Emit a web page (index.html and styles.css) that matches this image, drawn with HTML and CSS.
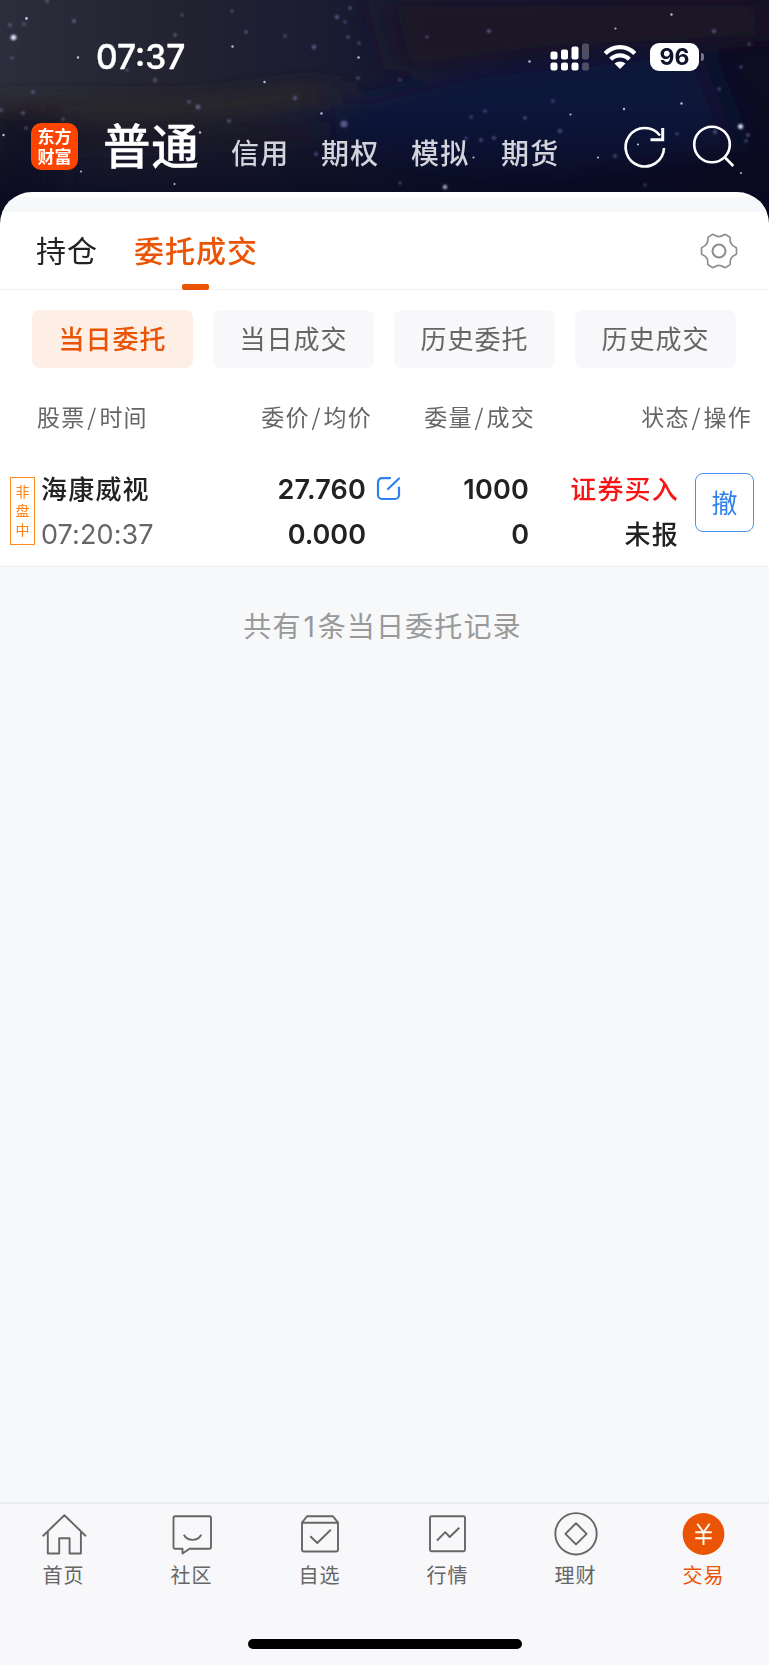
FILE: index.html
```html
<!DOCTYPE html>
<html lang="zh-CN">
<head>
<meta charset="utf-8">
<title>委托成交</title>
<link rel="stylesheet" href="styles.css">
</head>
<body>
<div class="app">
  <header class="hero">
    <svg class="sky" viewBox="0 0 769 240" preserveAspectRatio="none">
      <defs>
        <linearGradient id="base" x1="0" y1="0" x2="1" y2="0">
          <stop offset="0" stop-color="#2c2e3c"/><stop offset=".22" stop-color="#232331"/>
          <stop offset=".45" stop-color="#191b32"/><stop offset=".7" stop-color="#0f1230"/><stop offset="1" stop-color="#0e0c20"/>
        </linearGradient>
        <linearGradient id="fade" x1="0" y1="0" x2="0" y2="1">
          <stop offset=".45" stop-color="#07091f" stop-opacity="0"/><stop offset=".82" stop-color="#07091f" stop-opacity=".8"/><stop offset="1" stop-color="#05071a"/>
        </linearGradient>
        <filter id="soft" x="-30%" y="-60%" width="160%" height="220%"><feGaussianBlur stdDeviation="22 9"/></filter>
        <filter id="glow" x="-5%" y="-5%" width="110%" height="110%"><feGaussianBlur stdDeviation=".8"/></filter>
      </defs>
      <rect width="769" height="240" fill="url(#base)"/>
      <g filter="url(#soft)">
        <path d="M320 110 L480 72 L700 50 L740 150 L520 180 L330 150Z" fill="#0d153a"/>
        <path d="M380 0 H769 V40 L560 50 L400 72Z" fill="#1b1826"/>
        <path d="M-20 98 H200 L330 80 V102 L200 118 H-20Z" fill="#2a2629"/>
        <path d="M60 128 H330 V138 L60 150Z" fill="#241d28"/>
        <path d="M-20 112 H60 V220 H-20Z" fill="#131426"/>
      </g>
      <rect width="769" height="240" fill="url(#fade)"/>
      <g fill="#8b80c4" opacity=".6" filter="url(#glow)">
        <circle cx="47" cy="1" r="1.8"/><circle cx="10" cy="25" r="1.8"/><circle cx="24" cy="24" r="1.6"/><circle cx="74" cy="21" r="2"/>
        <circle cx="182" cy="15" r="1.5"/><circle cx="175" cy="35" r="1.8"/><circle cx="232" cy="11" r="1.5"/><circle cx="246" cy="32" r="1.7"/>
        <circle cx="285" cy="36" r="1.5"/><circle cx="337" cy="17" r="2"/><circle cx="350" cy="8" r="1.7"/><circle cx="345" cy="22" r="1.4"/>
        <circle cx="348" cy="37" r="1.6"/><circle cx="314" cy="47" r="2.2"/><circle cx="359" cy="43" r="1.5"/><circle cx="358" cy="78" r="1.6"/>
        <circle cx="155" cy="80" r="1.9"/><circle cx="127" cy="70" r="1.6"/><circle cx="295" cy="98" r="2"/><circle cx="189" cy="102" r="1.7"/>
        <circle cx="198" cy="107" r="2.4"/><circle cx="229" cy="121" r="1.8"/><circle cx="344" cy="124" r="3.6"/><circle cx="33" cy="92" r="1.8"/>
        <circle cx="1" cy="110" r="1.8"/><circle cx="23" cy="113" r="1.8"/><circle cx="63" cy="119" r="1.6"/><circle cx="26" cy="128" r="1.6"/>
        <circle cx="316" cy="154" r="1.8"/><circle cx="12" cy="58" r="1.6"/><circle cx="489" cy="31" r="2"/><circle cx="427" cy="37" r="1.4"/>
        <circle cx="714" cy="31" r="2"/><circle cx="749" cy="44" r="1.5"/><circle cx="741" cy="67" r="1.5"/><circle cx="719" cy="89" r="1.6"/>
        <circle cx="553" cy="101" r="1.6"/><circle cx="485" cy="111" r="1.6"/><circle cx="525" cy="118" r="1.7"/><circle cx="560" cy="131" r="1.9"/>
        <circle cx="481" cy="140" r="1.8"/><circle cx="494" cy="138" r="1.8"/><circle cx="466" cy="138" r="1.4"/><circle cx="615" cy="156" r="1.7"/>
        <circle cx="715" cy="132" r="1.9"/><circle cx="748" cy="135" r="1.8"/><circle cx="746" cy="141" r="1.4"/><circle cx="400" cy="80" r="1.4"/>
        <circle cx="471" cy="117" r="1.5"/><circle cx="400" cy="183" r="1.4"/><circle cx="645" cy="185" r="1.3"/><circle cx="677" cy="134" r="1.4"/>
      </g>
      <g fill="#dde1ff" filter="url(#glow)">
        <circle cx="13.500" cy="37.500" r="2.800"/><circle cx="740.500" cy="126.500" r="2.500"/><circle cx="445" cy="187" r="2.200" opacity=".75"/><circle cx="518" cy="147" r="2" opacity=".8"/>
      </g>
      <g fill="#d5dcff" opacity=".85">
        <circle cx="26.500" cy="18.500" r="1.400"/><circle cx="78" cy="57.500" r="1.200"/><circle cx="232.500" cy="46.500" r="1.200"/><circle cx="264.500" cy="82" r="1.200"/>
        <circle cx="358.500" cy="57.500" r="1.200"/><circle cx="321.500" cy="113.500" r="1.200"/><circle cx="3.500" cy="135" r="1.200"/><circle cx="200" cy="132.500" r="1.200"/>
        <circle cx="81" cy="171.500" r="1"/><circle cx="174.500" cy="184" r="1.100"/><circle cx="671.500" cy="14.500" r="1.200"/><circle cx="615.500" cy="28.500" r="1.100"/>
        <circle cx="529.500" cy="61.500" r="1.200"/><circle cx="681.500" cy="103.500" r="1.200"/><circle cx="624" cy="109" r="1.200"/><circle cx="570.500" cy="114.500" r="1.100"/>
        <circle cx="473.500" cy="157.500" r="1.100"/><circle cx="598" cy="157.500" r="1.100"/><circle cx="638" cy="144.500" r="1.100"/><circle cx="741" cy="173" r="1"/>
      </g>
    </svg>

    <div class="status">
      <span class="clock">07:37</span>
      <div class="indicators">
        <svg width="39" height="28" viewBox="0 0 39 28">
          <g fill="#fff">
            <rect x="0.500" y="8.500" width="7" height="8" rx="2"/><rect x="11" y="6.500" width="7" height="10" rx="2"/><rect x="21.500" y="3.500" width="7" height="13" rx="2"/>
            <rect x="0.500" y="19.500" width="7" height="8" rx="2.300"/><rect x="11" y="19.500" width="7" height="8" rx="2.300"/><rect x="21.500" y="19.500" width="7" height="8" rx="2.300"/>
          </g>
          <g fill="#fff" fill-opacity=".25"><rect x="32" y="0.500" width="7" height="16" rx="2"/><rect x="32" y="19.500" width="7" height="8" rx="2.300"/></g>
        </svg>
        <svg class="wifi" width="34" height="26" viewBox="0 0 34 26">
          <g fill="none" stroke="#fff" stroke-width="4.300"><path d="M2.200 9.400C10.500 1.100 23.500 1.100 31.800 9.400"/><path d="M7.700 15.200C13 10 21 10 26.300 15.200"/></g>
          <path d="M17 25l-5.500-5.500c3.100-2.700 7.900-2.700 11 0z" fill="#fff"/>
        </svg>
        <span class="battery">96</span>
        <i class="nub"></i>
      </div>
    </div>

    <div class="titlebar">
      <div class="logo">东方<br>财富</div>
      <h1>普通</h1>
      <nav class="modes"><span>信用</span><span>期权</span><span>模拟</span><span>期货</span></nav>
      <svg class="refresh" width="46" height="46" viewBox="0 0 46 46" fill="none" stroke="#fff" stroke-width="2.600">
        <path d="M42 24A19.200 19.200 0 1 1 38 11.500"/><path d="M40.700 4V15.700H28.500" stroke-width="3"/>
      </svg>
      <svg class="search" width="46" height="46" viewBox="0 0 46 46" fill="none" stroke="#fff" stroke-width="2.600">
        <circle cx="21" cy="20.500" r="17.800"/><path d="M33.500 33L42.300 42"/>
      </svg>
    </div>
  </header>

  <main class="sheet">
    <div class="strip"></div>
    <div class="tabs">
      <span class="tab">持仓</span>
      <span class="tab active">委托成交</span>
      <svg class="gear" width="38" height="36" viewBox="0 0 38 36" fill="none" stroke="#8e8e8e" stroke-width="1.700" stroke-linejoin="round">
        <path d="M12.500 1.500Q13.300 1.200 14 1.800C17 4 21 4 24 1.800Q24.700 1.200 25.500 1.500L29.500 3.900Q30.300 4.400 30.200 5.300C29.800 9.300 31.800 12.700 35.600 14.200Q36.500 14.600 36.500 15.500V20.500Q36.500 21.500 35.600 21.800C31.800 23.300 29.800 26.700 30.200 30.700Q30.300 31.600 29.500 32.100L25.500 34.500Q24.700 34.800 24 34.200C21 32 17 32 14 34.200Q13.300 34.800 12.500 34.500L8.500 32.100Q7.700 31.600 7.800 30.700C8.200 26.700 6.200 23.300 2.400 21.800Q1.500 21.500 1.500 20.500V15.500Q1.500 14.600 2.400 14.200C6.200 12.700 8.200 9.300 7.800 5.300Q7.700 4.400 8.500 3.900Z"/>
        <circle cx="19" cy="18" r="6.500" stroke-width="2.100"/>
      </svg>
    </div>
    <div class="chips">
      <span class="chip on">当日委托</span><span class="chip">当日成交</span><span class="chip">历史委托</span><span class="chip">历史成交</span>
    </div>
    <div class="cols head">
      <span class="left">股票<b>/</b>时间</span><span>委价<b>/</b>均价</span><span>委量<b>/</b>成交</span><span>状态<b>/</b>操作</span>
    </div>
    <div class="order">
      <div class="tag"><span>非</span><span>盘</span><span>中</span></div>
      <div class="pair name"><span class="cn">海康威视</span><span class="time">07:20:37</span></div>
      <div class="pair price"><span class="wide">27.760</span><span>0.000</span></div>
      <svg class="edit" width="26" height="26" viewBox="0 0 26 26" fill="none" stroke="#2f80ed" stroke-width="2.200" stroke-linecap="round">
        <path d="M14 2.200H6A4 4 0 0 0 2 6.200V19A4 4 0 0 0 6 23H19A4 4 0 0 0 23 19V11.500"/><path d="M12 13L23 2.500"/>
      </svg>
      <div class="pair qty"><span class="wide">1000</span><span>0</span></div>
      <div class="pair state"><span class="cn buy">证券买入</span><span class="cn">未报</span></div>
      <span class="cancel">撤</span>
    </div>
  </main>

  <p class="summary">共有<span>1</span>条当日委托记录</p>

  <footer class="tabbar">
    <div class="items">
      <div class="item">
        <svg width="46" height="46" viewBox="0 0 46 46"><path d="M1.700 24.200L23.400 3.200L45 24.200M6.800 20V41.500H18.200V26.300H28.600V41.500H39.900V20"/></svg><span>首页</span></div>
      <div class="item">
        <svg width="46" height="46" viewBox="0 0 46 46"><path d="M6.300 4.300H40.200A1.800 1.800 0 0 1 42 6.100V35A1.800 1.800 0 0 1 40.200 36.800H20.500L13.500 41.500V36.800H6.300A1.800 1.800 0 0 1 4.500 35V6.100A1.800 1.800 0 0 1 6.300 4.300Z"/><path d="M14.800 22.800C18.600 29.500 28.500 29.500 32.300 22.800"/></svg><span>社区</span></div>
      <div class="item">
        <svg width="46" height="46" viewBox="0 0 46 46"><path d="M5 10.500L10 4.300H36L41 10.500V37.500A2 2 0 0 1 39 39.500H7A2 2 0 0 1 5 37.500ZM5 10.700H41"/><path d="M13.300 24.300L20.300 31L33.800 17.800"/></svg><span>自选</span></div>
      <div class="item">
        <svg width="46" height="46" viewBox="0 0 46 46"><rect x="5" y="4.300" width="35" height="35" rx="1.500"/><path d="M12 28.500L20.200 20.200L24.700 25L34.300 15.800"/></svg><span>行情</span></div>
      <div class="item">
        <svg width="46" height="46" viewBox="0 0 46 46"><circle cx="23" cy="21.800" r="20.700"/><path d="M23 11.200L33.600 21.800L23 32.400L12.400 21.800Z"/></svg><span>理财</span></div>
      <div class="item current">
        <svg width="46" height="46" viewBox="0 0 46 46"><circle cx="22.500" cy="22" r="20.900" fill="#ea5404" stroke="none"/><path d="M16.300 11.800L22.500 20.200L28.700 11.800M22.500 20.200V33M14.300 20.200H30.700M14.300 26.300H30.700" stroke="#fff"/></svg><span>交易</span></div>
    </div>
    <div class="home"></div>
  </footer>
</div>
</body>
</html>
```

FILE: styles.css
```css
* { box-sizing: border-box; }
body { margin: 0; font-family: Inter, "Noto Sans CJK SC", sans-serif; color: #222; }
.app { width: 769px; height: 1665px; display: flex; flex-direction: column; background: #f7f8fa; overflow: hidden; }

.hero { position: relative; height: 192px; flex: none; padding-top: 40px; }
.sky { position: absolute; left: 0; top: 0; width: 769px; height: 240px; }
.status { position: relative; display: flex; height: 36px; padding: 0 65px 0 96px; justify-content: space-between; }
.clock { font-size: 33.500px; line-height: 35px; font-weight: 500; color: #fff; -webkit-text-stroke: .4px #fff; }
.indicators { display: flex; align-items: flex-start; padding-top: 3px; }
.wifi { margin: 1px 13px 0 14px; }
.battery { width: 49px; height: 28px; border-radius: 9px; background: #fff; color: #11132c; font-size: 23px; line-height: 28px; font-weight: 700; text-align: center; }
.nub { width: 3px; height: 8px; margin: 10px 0 0 2px; border-radius: 0 4px 4px 0; background: #77798a; }
.titlebar { position: relative; display: flex; height: 76px; margin-top: 33px; padding-left: 31px; align-items: flex-start; }
.logo { width: 47px; height: 47px; margin-top: 14px; padding-top: 3px; border-radius: 10px; background: #ff4400; color: #fff; text-align: center; font: 700 17px/20px "Noto Sans CJK SC", sans-serif; }
h1 { margin: 0 0 0 25px; width: 128px; font: 500 47.500px/69px "Noto Sans CJK SC", sans-serif; letter-spacing: .8px; color: #fff; -webkit-text-stroke: .3px #fff; }
.modes { display: flex; width: 389px; font: 500 28px/40px "Noto Sans CJK SC", sans-serif; letter-spacing: 1.200px; color: #d2d3db; margin-top: 23px; }
.modes span { width: 90px; flex: none; }
.refresh { margin: 15px 0 0 2px; flex: none; }
.search { margin: 15px 0 0 23px; flex: none; }

.sheet { position: relative; flex: none; height: 375px; border-radius: 32px 32px 0 0; background: #fff; overflow: hidden; border-bottom: 1px solid #eff0f2; }
.strip { height: 15px; margin-top: 5px; background: #f6f8fa; }
.tabs { display: flex; height: 78px; padding: 0 31px 0 36px; border-bottom: 1px solid #f1f2f3; font: 400 30px/74px "Noto Sans CJK SC", sans-serif; letter-spacing: 1px; }
.tab { position: relative; margin-right: 36px; }
.active { color: #ea5404; font-weight: 500; }
.active::after { content: ""; position: absolute; left: 48px; top: 72px; width: 27px; height: 6px; border-radius: 2px; background: #ea5404; }
.gear { margin: 21px 0 0 auto; }
.chips { display: flex; gap: 20px; padding: 20px 32px 0; }
.chip { width: 161px; height: 58px; border-radius: 8px; background: #f8f8fa; color: #666; text-align: center; font: 400 26px/56px "Noto Sans CJK SC", sans-serif; letter-spacing: 1px; }
.on { background: #fdeee6; color: #ea5404; font-weight: 500; }
.cols { display: grid; grid-template-columns: 170px 165px 163px 217px; padding-left: 37px; margin-top: 28px; font: 400 23px/40px "Noto Sans CJK SC", sans-serif; letter-spacing: 1.200px; color: #666; text-align: right; }
.cols .left { text-align: left; }
.cols b { display: inline-block; width: 14px; font-weight: 400; text-align: center; }
.order { display: flex; padding: 37px 0 0 10px; height: 131px; }
.tag { width: 25px; height: 68px; margin: 4px 1px 0 0; border: 1px solid #ff8a1f; color: #ff7f0e; display: flex; flex-direction: column; align-items: center; padding-top: 4px; font: 400 14px/19px "Noto Sans CJK SC", sans-serif; }
.pair { display: flex; flex-direction: column; font-size: 27px; line-height: 45px; font-weight: 600; text-align: right; margin-top: -6px; }
.cn { font: 500 26px/45px "Noto Sans CJK SC", sans-serif; letter-spacing: 1.200px; position: relative; top: -2px; }
.name { width: 120px; margin-left: 5px; text-align: left; }
.time { font-weight: 400; color: #666; letter-spacing: .1px; }
.wide { letter-spacing: .2px; }
.price { width: 205px; }
.edit { width: 26px; margin: 3px 0 0 10px; }
.qty { width: 127px; }
.state { width: 150px; }
.buy { color: #fa1414; }
.cancel { width: 59px; height: 59px; margin-left: 16px; border: 1.500px solid #4a90ee; border-radius: 8px; color: #2f80ed; font: 400 26px/55px "Noto Sans CJK SC", sans-serif; text-align: center; }

.summary { margin: 38px 4px 0 0; text-align: center; font: 400 28px/40px "Noto Sans CJK SC", sans-serif; letter-spacing: 1.150px; color: #999; }
.summary span { font-family: Inter, sans-serif; margin: 0 1.500px 0 2px; }
.tabbar { margin-top: auto; height: 163px; border-top: 2px solid #ebecee; background: #f8f8fa; padding-top: 8px; }
.items { display: flex; padding: 0 1px 0 0; }
.item { flex: 1; display: flex; flex-direction: column; align-items: center; font: 400 20px/31px "Noto Sans CJK SC", sans-serif; letter-spacing: 1px; color: #666; }
.item span { margin: 1px 1px 0 0; }
.item svg { fill: none; stroke: #666; stroke-width: 1.900; stroke-linejoin: round; }
.current { color: #ea5404; }
.home { width: 274px; height: 10px; margin: 49px auto 0; border-radius: 5px; background: #000; }
```
